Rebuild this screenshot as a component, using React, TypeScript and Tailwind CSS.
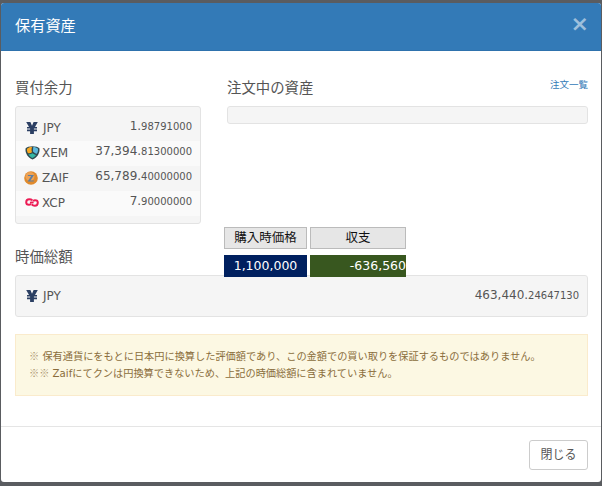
import React from 'react'

const font = "[font-family:'DejaVu_Sans','Noto_Sans_CJK_JP',sans-serif]"

function YenIcon() {
  return (
    <svg width="12" height="14" viewBox="0 0 12 14" className="shrink-0">
      <path d="M0.2 1H4.4L6 4.8 7.6 1H11.8L9 6H11V7.6H7.9V8.6H11V10.2H7.9V13H4.1V10.2H1V8.6H4.1V7.6H1V6H3Z" fill="#2b3f63" />
    </svg>
  )
}

function XemIcon() {
  return (
    <svg width="15" height="15" viewBox="0 0 15 15" className="shrink-0">
      <path d="M0.5 3.5C3 0.6 12 0.6 14.5 3.5C15 8 12 13 7.5 14.5C3 13 0 8 0.5 3.5Z" fill="#2f4a50" />
      <path d="M2 3.8C3.5 2.4 5.5 2 7 2C6.4 4 6.4 5.5 7 7.2C5.5 8.2 4 8.4 2.8 8C2 6.5 1.8 5 2 3.8Z" fill="#f7a823" />
      <path d="M8.3 2C10 2 11.6 2.6 13 3.8C13.2 6 12.6 7.6 11.8 8.8C10.4 8.6 9 7.6 8 6.4C8 4.8 8 3.4 8.3 2Z" fill="#5cb8dc" />
      <path d="M3.4 9.2C5 9.4 6.4 8.8 7.4 8.2C8.4 9 9.8 9.8 11.2 10C10.2 11.4 9 12.4 7.5 13C5.8 12.4 4.4 11 3.4 9.2Z" fill="#35b8a5" />
    </svg>
  )
}

function ZaifIcon() {
  return (
    <svg width="14" height="14" viewBox="0 0 14 14" className="shrink-0">
      <circle cx="7" cy="7" r="6.8" fill="#e08a2c" />
      <circle cx="6" cy="5.5" r="4.5" fill="#eda255" />
      <path d="M4 4H10L6.4 9.4H10L9.6 10.4H3.6L7.2 5H3.8Z" fill="#5e7ea0" />
    </svg>
  )
}

function XcpIcon() {
  return (
    <svg width="14" height="9" viewBox="0 0 14 9" className="shrink-0">
      <path d="M7.4 2.4C6.6 1.6 5.6 1.2 4.2 1.2C2.4 1.2 1.2 2.6 1.2 4.2C1.2 5.8 2.4 6.8 4 6.8C4.8 6.8 5.4 6.4 5.8 6M8.2 3C8.6 2.6 9.2 2.2 10 2.2C11.6 2.2 12.8 3 12.8 4.6C12.8 6.4 11.6 7.8 9.8 7.8C8.4 7.8 7.4 7.2 6.6 6.4M5 4.8L8.6 4.2" fill="none" stroke="#ec1c55" strokeWidth="2" />
    </svg>
  )
}

function Amount({ whole, frac, className = '' }: { whole: string; frac: string; className?: string }) {
  return (
    <span className={`text-[12px] text-[#555] ${className}`}>
      {whole}
      <span className="text-[10px]">{frac}</span>
    </span>
  )
}

// the note mark comes out narrow in DejaVu, the reference has it full width
function Mark({ children }: { children: string }) {
  return <span className="[font-family:'Noto_Sans_CJK_JP',sans-serif] leading-none opacity-70">{children}</span>
}

const balances = [
  { icon: <YenIcon />, name: 'JPY', whole: '1.', frac: '98791000', bg: 'bg-[#f5f5f5]', pad: 'pl-[10px]', gap: 'gap-[5px]' },
  { icon: <XemIcon />, name: 'XEM', whole: '37,394.', frac: '81300000', bg: 'bg-[#fafafa]', pad: 'pl-[9px]', gap: 'gap-[2px]' },
  { icon: <ZaifIcon />, name: 'ZAIF', whole: '65,789.', frac: '40000000', bg: 'bg-[#f5f5f5]', pad: 'pl-[8px]', gap: 'gap-[4px]' },
  { icon: <XcpIcon />, name: 'XCP', whole: '7.', frac: '90000000', bg: 'bg-[#fafafa]', pad: 'pl-[9px]', gap: 'gap-[3px]' },
]

export default function App() {
  return (
    <div className={`w-[602px] h-[486px] overflow-hidden bg-[#5a5c60] pt-[3px] pl-[1px] pr-[1px] pb-[4px] ${font}`}>
      <div className="relative h-[479px] bg-white rounded-[3px] overflow-hidden flex flex-col">
        {/* Header */}
        <div className="h-[48px] shrink-0 bg-[#337ab7] border-b border-[#2e72ad] flex items-center justify-between pl-[14px] pr-[12px]">
          <h4 className="text-[15.2px] text-white leading-none">保有資産</h4>
          <span className="text-[#9dbfdc] text-[22px] font-bold leading-none -mt-[6px]">×</span>
        </div>

        {/* Body */}
        <div className="h-[376px] shrink-0 pl-[14px] pr-[13px] pt-[27px] border-b border-[#e5e5e5]">
          <div className="flex gap-[26px]">
            <div className="w-[186px] shrink-0">
              <h5 className="text-[14.4px] leading-[20px] text-[#555] mb-[8px]">買付余力</h5>
              <div className="h-[118px] bg-[#f5f5f5] border border-[#e3e3e3] rounded-[3px] pt-[9px]">
                {balances.map((b) => (
                  <div key={b.name} className={`h-[25px] flex items-center justify-between pr-[8px] pb-[2px] ${b.pad} ${b.bg}`}>
                    <span className={`flex items-center text-[12px] text-[#555] ${b.gap}`}>
                      {b.icon}
                      {b.name}
                    </span>
                    <Amount whole={b.whole} frac={b.frac} className="mb-[3px]" />
                  </div>
                ))}
              </div>
            </div>
            <div className="flex-1">
              <div className="flex justify-between">
                <h5 className="text-[14.4px] leading-[20px] text-[#555] mb-[8px]">注文中の資産</h5>
                <a className="text-[9.5px] leading-[14px] text-[#337ab7]">注文一覧</a>
              </div>
              <div className="h-[18px] bg-[#f5f5f5] border border-[#e3e3e3] rounded-[3px]" />
            </div>
          </div>

          <h5 className="text-[14.4px] leading-[20px] text-[#555] mt-[23px] mb-[8px]">時価総額</h5>
          <div className="h-[42px] bg-[#f5f5f5] border border-[#e3e3e3] rounded-[3px] flex items-start justify-between pl-[10px] pr-[8px] pt-[10px]">
            <span className="flex items-center gap-[5px] text-[12px] text-[#555] mt-[1px]">
              <YenIcon />
              JPY
            </span>
            <Amount whole="463,440." frac="24647130" />
          </div>

          <div className="mt-[17px] h-[62px] bg-[#fcf8e3] border border-[#faebcc] text-[#8a6d3b] text-[10.2px] leading-[17px] pl-[13px] pt-[13px]">
            <p><Mark>※</Mark> 保有通貨にをもとに日本円に換算した評価額であり、この金額での買い取りを保証するものではありません。</p>
            <p><Mark>※※</Mark> Zaifにてクンは円換算できないため、上記の時価総額に含まれていません。</p>
          </div>
        </div>

        {/* Footer */}
        <div className="flex-1 flex justify-end items-start pt-[13px] pr-[13px]">
          <button className="w-[59px] h-[30px] bg-white border border-[#ccc] rounded-[3px] text-[12px] text-[#555]">閉じる</button>
        </div>

        {/* Overlay table */}
        <div className="absolute left-[223px] top-[224px] w-[183px] text-[12.5px] leading-none">
          <div className="flex gap-[3px]">
            <div className="w-[83px] h-[22px] bg-[#e6e6e6] border border-[#bbb] text-[#111] flex items-center justify-center">購入時価格</div>
            <div className="w-[96px] h-[22px] bg-[#e6e6e6] border border-[#bbb] text-[#111] flex items-center justify-center">収支</div>
          </div>
          <div className="flex gap-[3px] mt-[6px] items-start">
            <div className="w-[83px] h-[22px] bg-[#00205f] text-white flex items-center justify-center">1,100,000</div>
            <div className="w-[96px] h-[22px] bg-[#38571f] text-white flex items-center justify-end">-636,560</div>
          </div>
        </div>
      </div>
    </div>
  )
}
